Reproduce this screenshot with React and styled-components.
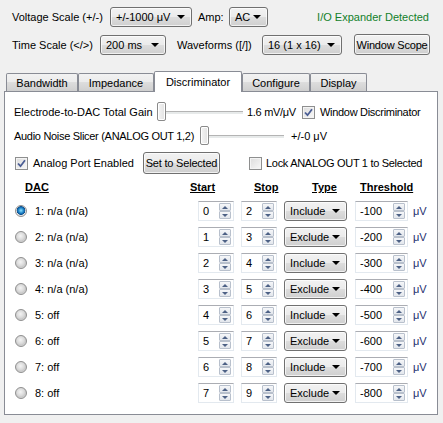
import React from 'react';
import styled, { createGlobalStyle } from 'styled-components';

const GlobalStyle = createGlobalStyle`
  body {
    margin: 0;
    background: #f0f0f0;
    font-family: "Liberation Sans", Arial, sans-serif;
    font-size: 11px;
    color: #000;
  }
`;

const channels = [
  { label: '1: n/a (n/a)', start: 0, stop: 2, type: 'Include', threshold: -100 },
  { label: '2: n/a (n/a)', start: 1, stop: 3, type: 'Exclude', threshold: -200 },
  { label: '3: n/a (n/a)', start: 2, stop: 4, type: 'Include', threshold: -300 },
  { label: '4: n/a (n/a)', start: 3, stop: 5, type: 'Exclude', threshold: -400 },
  { label: '5: off', start: 4, stop: 6, type: 'Include', threshold: -500 },
  { label: '6: off', start: 5, stop: 7, type: 'Exclude', threshold: -600 },
  { label: '7: off', start: 6, stop: 8, type: 'Include', threshold: -700 },
  { label: '8: off', start: 7, stop: 9, type: 'Exclude', threshold: -800 },
];

const tabs = [
  { name: 'Bandwidth', width: 72 },
  { name: 'Impedance', width: 76 },
  { name: 'Discriminator', width: 88, active: true },
  { name: 'Configure', width: 68 },
  { name: 'Display', width: 57 },
];

const Combo = ({ value, width }) => (
  <ComboBox $w={width}>
    <span>{value}</span>
    <ComboArrow />
  </ComboBox>
);

const Spin = ({ value, width }) => (
  <SpinBox $w={width}>
    <SpinText>{value}</SpinText>
    <SpinButtons>
      <SpinHalf>
        <ArrowUp />
      </SpinHalf>
      <SpinHalf>
        <ArrowDown />
      </SpinHalf>
    </SpinButtons>
  </SpinBox>
);

const Check = ({ checked, ml }) => (
  <CheckBox $ml={ml}>
    {checked && (
      <svg width="9" height="9" viewBox="0 0 9 9">
        <path d="M1 4.5 L3.5 7.2 L8 1.2" fill="none" stroke="#4a5d94" strokeWidth="1.8" />
      </svg>
    )}
  </CheckBox>
);

const Slider = ({ width, ml }) => (
  <SliderWrap $w={width} $ml={ml}>
    <SliderTrack />
    <SliderHandle />
  </SliderWrap>
);

const App = () => {
  return (
    <>
      <GlobalStyle />
      <Page>
        <TopRow>
          <Text $w={98}>Voltage Scale (+/-)</Text>
          <Combo value="+/-1000 μV" width={82} />
          <Text $w={31} $ml={6}>Amp:</Text>
          <Combo value="AC" width={39} />
          <Status>I/O Expander Detected</Status>
        </TopRow>
        <TopRow $mt={7}>
          <Text $w={88}>Time Scale (&lt;/&gt;)</Text>
          <Combo value="200 ms" width={66} />
          <Text $w={85} $ml={11}>Waveforms ([/])</Text>
          <Combo value="16 (1 x 16)" width={80} />
          <PushButton $w={76} $h={21} $ml={12}>Window Scope</PushButton>
        </TopRow>

        <TabBar>
          {tabs.map((t) => (
            <Tab key={t.name} $w={t.width} $active={t.active}>
              {t.name}
            </Tab>
          ))}
        </TabBar>

        <Pane>
          <ControlRow>
            <Text $w={143}>Electrode-to-DAC Total Gain</Text>
            <Slider width={86} />
            <Text $w={55} $ml={4} $tight>1.6 mV/μV</Text>
            <Check checked />
            <Text $ml={5} $tight>Window Discriminator</Text>
          </ControlRow>
          <ControlRow $mt={4}>
            <Text $w={186} $tight>Audio Noise Slicer (ANALOG OUT 1,2)</Text>
            <Slider width={84} />
            <Text $ml={7}>+/-0 μV</Text>
          </ControlRow>
          <ControlRow $mt={6} $h={22}>
            <Check checked ml={1} />
            <Text $w={110} $ml={5}>Analog Port Enabled</Text>
            <PushButton $w={77} $h={22}>Set to Selected</PushButton>
            <Check ml={29} />
            <Text $ml={4} $tight>Lock ANALOG OUT 1 to Selected</Text>
          </ControlRow>

          <HeaderRow>
            <Heading $pl={11}>DAC</Heading>
            <Heading>Start</Heading>
            <Heading>Stop</Heading>
            <Heading>Type</Heading>
            <Heading>Threshold</Heading>
          </HeaderRow>

          <ChannelGrid>
            {channels.map((c, i) => (
              <React.Fragment key={c.label}>
                <ChannelCell>
                  <Radio $on={i === 0} />
                  <Text $ml={8}>{c.label}</Text>
                </ChannelCell>
                <Spin value={c.start} width={36} />
                <Spin value={c.stop} width={36} />
                <Combo value={c.type} width={63} />
                <Spin value={c.threshold} width={53} />
                <Unit>μV</Unit>
              </React.Fragment>
            ))}
          </ChannelGrid>
        </Pane>
      </Page>
    </>
  );
};

export default App;

const Page = styled.div`
  width: 443px;
  height: 423px;
  padding-top: 6px;
  box-sizing: border-box;
`;

const TopRow = styled.div`
  display: flex;
  align-items: center;
  height: 21px;
  margin-top: ${({ $mt }) => $mt || 0}px;
  padding: 0 14px 0 12px;
`;

const Text = styled.span`
  flex: none;
  white-space: nowrap;
  width: ${({ $w }) => ($w ? `${$w}px` : 'auto')};
  margin-left: ${({ $ml }) => $ml || 0}px;
  letter-spacing: ${({ $tight }) => ($tight ? '-0.3px' : 'normal')};
`;

const Status = styled.span`
  margin-left: auto;
  color: #12802a;
  white-space: nowrap;
`;

const winButton = `
  box-sizing: border-box;
  border: 1px solid #707070;
  border-radius: 3px;
  background: linear-gradient(#f2f2f2 0%, #ebebeb 50%, #dddddd 50%, #cfcfcf 100%);
  box-shadow: inset 0 0 0 1px rgba(255, 255, 255, 0.7);
`;

const ComboBox = styled.div`
  ${winButton}
  flex: none;
  display: flex;
  align-items: center;
  justify-content: space-between;
  width: ${({ $w }) => $w}px;
  height: 20px;
  padding: 0 6px 0 5px;
  white-space: nowrap;
`;

const ComboArrow = styled.span`
  width: 0;
  height: 0;
  border-left: 4px solid transparent;
  border-right: 4px solid transparent;
  border-top: 4px solid #000;
`;

const PushButton = styled.div`
  ${winButton}
  flex: none;
  display: flex;
  align-items: center;
  justify-content: center;
  width: ${({ $w }) => $w}px;
  height: ${({ $h }) => $h}px;
  margin-left: ${({ $ml }) => $ml || 0}px;
  white-space: nowrap;
  letter-spacing: -0.2px;
`;

const TabBar = styled.div`
  position: relative;
  z-index: 1;
  display: flex;
  align-items: flex-end;
  height: 21px;
  margin-top: 16px;
  margin-bottom: -1px;
  padding-left: 6px;
`;

const Tab = styled.div`
  box-sizing: border-box;
  flex: none;
  display: flex;
  align-items: center;
  justify-content: center;
  width: ${({ $w }) => $w}px;
  height: ${({ $active }) => ($active ? 21 : 18)}px;
  margin-bottom: ${({ $active }) => ($active ? 0 : 1)}px;
  border: 1px solid #898c95;
  border-bottom: none;
  border-radius: 2px 2px 0 0;
  background: ${({ $active }) =>
    $active ? '#ffffff' : 'linear-gradient(#f2f2f2 0%, #ebebeb 50%, #dddddd 50%, #cfcfcf 100%)'};
  padding-top: ${({ $active }) => ($active ? 0 : 1)}px;
`;

const Pane = styled.div`
  box-sizing: border-box;
  height: 324px;
  margin: 0 5px 0 4px;
  padding: 10px 9px 0 9px;
  border: 1px solid #898c95;
  background: #ffffff;
`;

const ControlRow = styled.div`
  display: flex;
  align-items: center;
  height: ${({ $h }) => $h || 20}px;
  margin-top: ${({ $mt }) => $mt || 0}px;
`;

const SliderWrap = styled.div`
  position: relative;
  flex: none;
  width: ${({ $w }) => $w}px;
  height: 20px;
  margin-left: ${({ $ml }) => $ml || 0}px;
`;

const SliderTrack = styled.div`
  position: absolute;
  left: 2px;
  right: 0;
  top: 9px;
  height: 2px;
  background: #e7eaea;
  border-top: 1px solid #b4b4b4;
`;

const SliderHandle = styled.div`
  position: absolute;
  left: 0;
  top: 0;
  box-sizing: border-box;
  width: 9px;
  height: 19px;
  border: 1px solid #8a8a8a;
  border-radius: 2px;
  background: linear-gradient(90deg, #f5f5f5, #e2e2e2);
  box-shadow: inset 0 0 0 1px #ffffff;
`;

const CheckBox = styled.div`
  box-sizing: border-box;
  flex: none;
  display: flex;
  align-items: center;
  justify-content: center;
  width: 13px;
  height: 13px;
  margin-left: ${({ $ml }) => $ml || 0}px;
  border: 1px solid #8e8f8f;
  background: linear-gradient(135deg, #dcdcdc, #f8f8f8);
  box-shadow: inset 0 0 0 1px #f4f4f4;
`;

const HeaderRow = styled.div`
  display: grid;
  grid-template-columns: 176px 64px 58px 48px auto;
  height: 14px;
  align-items: center;
  margin-top: 6px;
`;

const Heading = styled.span`
  padding-left: ${({ $pl }) => $pl || 0}px;
  font-weight: bold;
  text-decoration: underline;
  white-space: nowrap;
`;

const ChannelGrid = styled.div`
  display: grid;
  grid-template-columns: 184px 43px 43px 71px 58px auto;
  grid-auto-rows: 20px;
  row-gap: 6px;
  align-items: center;
  margin-top: 7px;
`;

const ChannelCell = styled.div`
  display: flex;
  align-items: center;
  padding-left: 1px;
`;

const Radio = styled.div`
  box-sizing: border-box;
  flex: none;
  width: 12px;
  height: 12px;
  border-radius: 50%;
  border: 1px solid #8f8f8f;
  background: ${({ $on }) =>
    $on
      ? 'radial-gradient(circle at 50% 45%, #8fe3ff 0%, #1f85c9 35%, #0d4f8f 55%, #e4e4e4 62%, #f6f6f6 100%)'
      : 'radial-gradient(circle at 45% 40%, #f4f4f4 0%, #dadada 45%, #c9c9c9 62%, #f3f3f3 100%)'};
`;

const SpinBox = styled.div`
  box-sizing: border-box;
  display: flex;
  align-items: center;
  justify-content: space-between;
  width: ${({ $w }) => $w}px;
  height: 20px;
  padding-right: 2px;
  border: 1px solid #e3e9ef;
  border-top-color: #abadb3;
  background: #ffffff;
`;

const SpinText = styled.span`
  padding-left: 4px;
  white-space: nowrap;
`;

const SpinButtons = styled.div`
  display: flex;
  flex-direction: column;
  width: 12px;
  height: 16px;
`;

const SpinHalf = styled.div`
  box-sizing: border-box;
  display: flex;
  align-items: center;
  justify-content: center;
  height: 8px;
  border: 1px solid #b8c0cc;
  border-radius: 1px;
  background: linear-gradient(#f6f7f9, #e2e6ec);
`;

const ArrowUp = styled.span`
  width: 0;
  height: 0;
  border-left: 3px solid transparent;
  border-right: 3px solid transparent;
  border-bottom: 3px solid #4d6185;
`;

const ArrowDown = styled.span`
  width: 0;
  height: 0;
  border-left: 3px solid transparent;
  border-right: 3px solid transparent;
  border-top: 3px solid #4d6185;
`;

const Unit = styled.span`
  color: #1e2f6e;
  white-space: nowrap;
`;
